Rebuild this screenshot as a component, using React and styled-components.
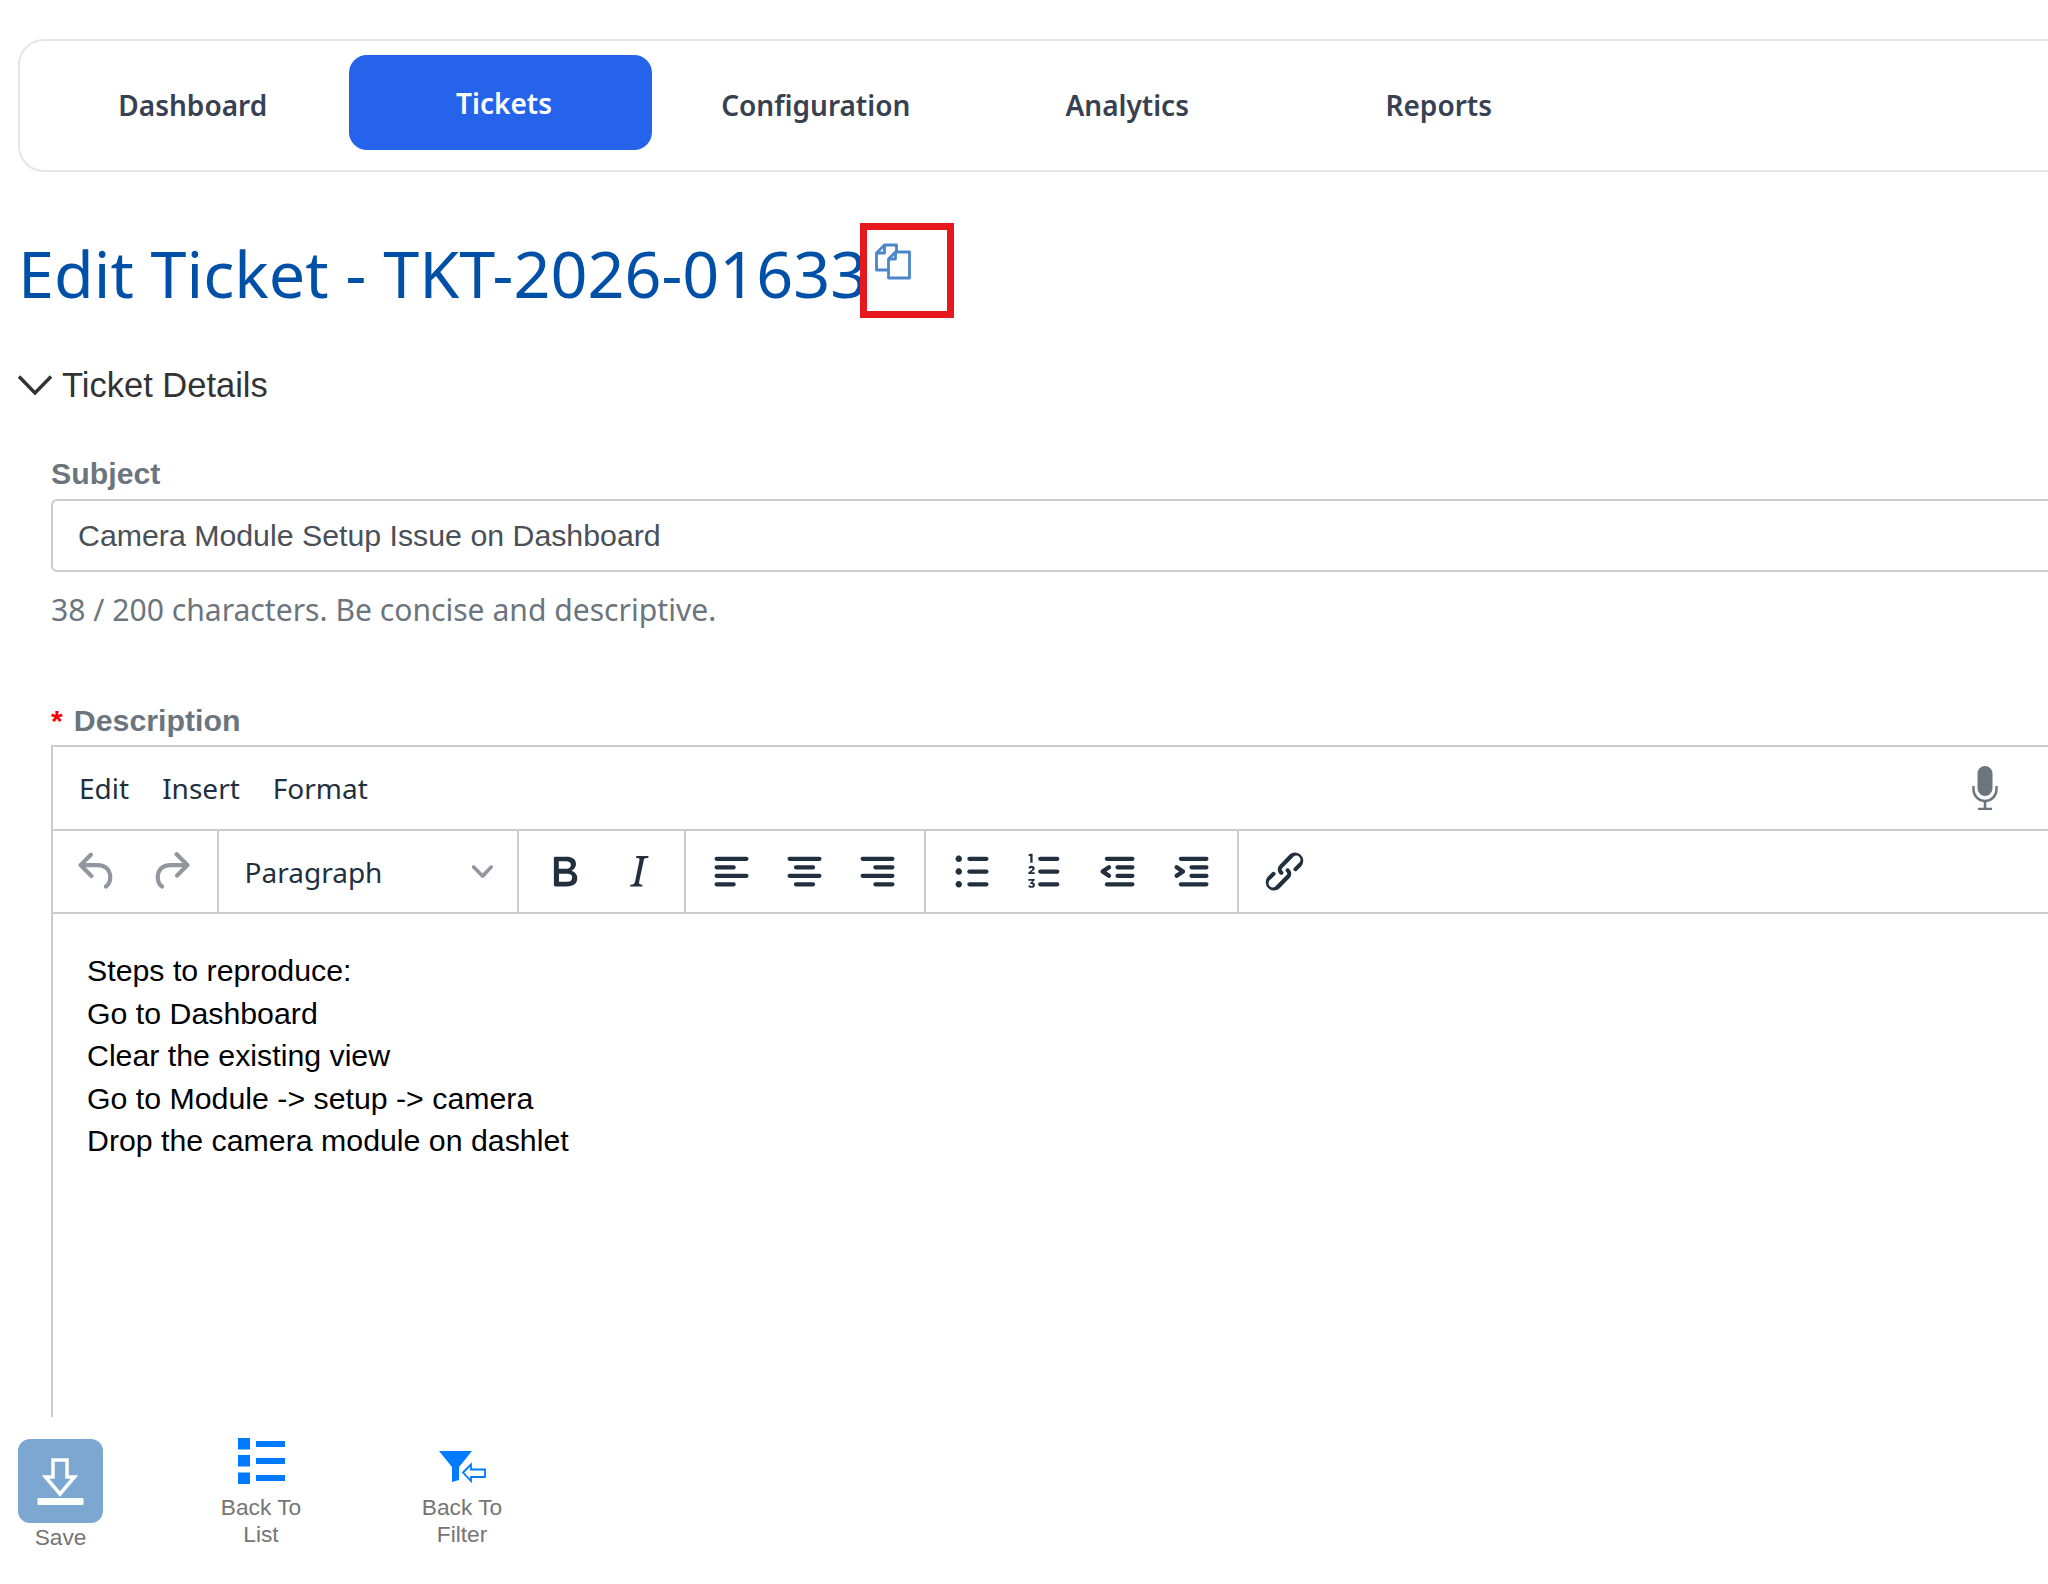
import styled, { createGlobalStyle } from "styled-components";

const GlobalStyle = createGlobalStyle`
  html, body {
    margin: 0;
    padding: 0;
    background: #fff;
  }
  body {
    width: 2048px;
    height: 1584px;
    overflow: hidden;
    font-family: "Liberation Sans", Arial, sans-serif;
  }
`;

const TABS = ["Dashboard", "Tickets", "Configuration", "Analytics", "Reports"];
const CONTENT_LINES = [
  "Steps to reproduce:",
  "Go to Dashboard",
  "Clear the existing view",
  "Go to Module -> setup -> camera",
  "Drop the camera module on dashlet",
];

// editor toolbar glyphs, 24 unit grid
const ICONS = {
  undo: "M6.4 8H12c3.7 0 6.2 2 6.8 5.1.6 2.7-.4 5.6-2.3 6.8a1 1 0 0 1-1-1.8c1.1-.6 1.8-2.7 1.4-4.6-.5-2.1-2.1-3.5-4.9-3.5H6.4l3.3 3.3a1 1 0 1 1-1.4 1.4l-5-5a1 1 0 0 1 0-1.4l5-5a1 1 0 0 1 1.4 1.4L6.4 8z",
  redo: "M17.6 10H12c-2.8 0-4.4 1.4-4.9 3.5-.4 2 .3 4 1.4 4.6a1 1 0 1 1-1 1.8c-2-1.2-2.9-4.1-2.3-6.8.6-3 3-5.1 6.8-5.1h5.6l-3.3-3.3a1 1 0 1 1 1.4-1.4l5 5a1 1 0 0 1 0 1.4l-5 5a1 1 0 0 1-1.4-1.4l3.3-3.3z",
  bold: "M7.8 19c-.3 0-.5 0-.6-.2l-.2-.5V5.7c0-.2 0-.4.2-.5l.6-.2h5c1.5 0 2.7.3 3.5 1 .7.6 1.1 1.4 1.1 2.5a3 3 0 0 1-.6 1.9c-.4.6-1 1-1.6 1.2.4.1.9.3 1.3.6s.8.7 1 1.2c.4.4.5 1 .5 1.6 0 1.3-.4 2.3-1.3 3-.8.7-2.1 1-3.8 1H7.8zm5-8.3c.6 0 1.2-.1 1.6-.5.4-.3.6-.7.6-1.3 0-1.1-.8-1.7-2.3-1.7H9.3v3.5h3.4zm.5 6c.7 0 1.3-.1 1.7-.4.4-.4.6-.9.6-1.5s-.2-1-.7-1.4c-.4-.3-1-.4-2-.4H9.4v3.8h4z",
  italic: "M16.7 4.7l-.1.9h-.3c-.6 0-1 0-1.4.3-.3.3-.4.6-.5 1.1l-2.1 9.8v.6c0 .5.4.8 1.4.8h.2l-.2.8H8l.2-.8h.2c1.1 0 1.8-.5 2-1.5l2-9.8.1-.5c0-.6-.4-.8-1.4-.8h-.3l.2-.9h5.8z",
  alignLeft: "M5 5h14c.6 0 1 .4 1 1s-.4 1-1 1H5a1 1 0 1 1 0-2zm0 4h8c.6 0 1 .4 1 1s-.4 1-1 1H5a1 1 0 1 1 0-2zm0 8h8c.6 0 1 .4 1 1s-.4 1-1 1H5a1 1 0 0 1 0-2zm0-4h14c.6 0 1 .4 1 1s-.4 1-1 1H5a1 1 0 0 1 0-2z",
  alignCenter: "M5 5h14c.6 0 1 .4 1 1s-.4 1-1 1H5a1 1 0 1 1 0-2zm3 4h8c.6 0 1 .4 1 1s-.4 1-1 1H8a1 1 0 1 1 0-2zm0 8h8c.6 0 1 .4 1 1s-.4 1-1 1H8a1 1 0 0 1 0-2zm-3-4h14c.6 0 1 .4 1 1s-.4 1-1 1H5a1 1 0 0 1 0-2z",
  alignRight: "M5 5h14c.6 0 1 .4 1 1s-.4 1-1 1H5a1 1 0 1 1 0-2zm6 4h8c.6 0 1 .4 1 1s-.4 1-1 1h-8a1 1 0 0 1 0-2zm0 8h8c.6 0 1 .4 1 1s-.4 1-1 1h-8a1 1 0 0 1 0-2zm-6-4h14c.6 0 1 .4 1 1s-.4 1-1 1H5a1 1 0 0 1 0-2z",
  bullets: "M11 5h8c.6 0 1 .4 1 1s-.4 1-1 1h-8a1 1 0 0 1 0-2zm0 6h8c.6 0 1 .4 1 1s-.4 1-1 1h-8a1 1 0 0 1 0-2zm0 6h8c.6 0 1 .4 1 1s-.4 1-1 1h-8a1 1 0 0 1 0-2zM4.5 6c0-.4.1-.8.4-1 .3-.4.7-.5 1.1-.5s.8.1 1 .4c.4.3.5.7.5 1.1s-.1.8-.4 1c-.3.4-.7.5-1.1.5s-.8-.1-1-.4c-.4-.3-.5-.7-.5-1.1zm0 6c0-.4.1-.8.4-1 .3-.4.7-.5 1.1-.5s.8.1 1 .4c.4.3.5.7.5 1.1s-.1.8-.4 1c-.3.4-.7.5-1.1.5s-.8-.1-1-.4c-.4-.3-.5-.7-.5-1.1zm0 6c0-.4.1-.8.4-1 .3-.4.7-.5 1.1-.5s.8.1 1 .4c.4.3.5.7.5 1.1s-.1.8-.4 1c-.3.4-.7.5-1.1.5s-.8-.1-1-.4c-.4-.3-.5-.7-.5-1.1z",
  numbers: "M10 17h8c.6 0 1 .4 1 1s-.4 1-1 1h-8a1 1 0 0 1 0-2zm0-6h8c.6 0 1 .4 1 1s-.4 1-1 1h-8a1 1 0 0 1 0-2zm0-6h8c.6 0 1 .4 1 1s-.4 1-1 1h-8a1 1 0 1 1 0-2zM5.1 3.6h1.3v4.3H5.3V4.7h-.8v-.6zM4.4 10.1c.2-.5.8-.8 1.5-.8.9 0 1.5.5 1.5 1.2 0 .5-.3.9-.9 1.3l-.8.6h1.7v.8H4.4v-.7l1.5-1.2c.3-.2.4-.4.4-.6 0-.2-.2-.4-.5-.4s-.5.2-.6.5zM4.4 15.5h3v.6l-1.1 1c.7.1 1.2.5 1.2 1.2 0 .9-.7 1.4-1.6 1.4-.7 0-1.3-.3-1.6-.8l.7-.5c.2.3.5.5.9.5s.6-.2.6-.5-.3-.5-.8-.5h-.4v-.6l1-1h-1.9z",
  outdent: "M7 5h12c.6 0 1 .4 1 1s-.4 1-1 1H7a1 1 0 1 1 0-2zm5 4h7c.6 0 1 .4 1 1s-.4 1-1 1h-7a1 1 0 0 1 0-2zm0 4h7c.6 0 1 .4 1 1s-.4 1-1 1h-7a1 1 0 0 1 0-2zm-5 4h12a1 1 0 0 1 0 2H7a1 1 0 0 1 0-2zm1.6-3.8a1 1 0 0 1-1.2 1.6l-3-2a1 1 0 0 1 0-1.6l3-2a1 1 0 0 1 1.2 1.6L6.8 12l1.8 1.2z",
  indent: "M7 5h12c.6 0 1 .4 1 1s-.4 1-1 1H7a1 1 0 1 1 0-2zm5 4h7c.6 0 1 .4 1 1s-.4 1-1 1h-7a1 1 0 0 1 0-2zm0 4h7c.6 0 1 .4 1 1s-.4 1-1 1h-7a1 1 0 0 1 0-2zm-5 4h12a1 1 0 0 1 0 2H7a1 1 0 0 1 0-2zm-2.6-3.8L6.2 12l-1.8-1.2a1 1 0 0 1 1.2-1.6l3 2a1 1 0 0 1 0 1.6l-3 2a1 1 0 1 1-1.2-1.6z",
  link: "M6.2 12.3a1 1 0 0 1 1.4 1.4l-2 2a2 2 0 1 0 2.6 2.8l4.8-4.8a1 1 0 0 0 0-1.4 1 1 0 1 1 1.4-1.3 2.9 2.9 0 0 1 0 4L9.6 20a3.9 3.9 0 0 1-5.5-5.5l2-2zm11.6-.6a1 1 0 0 1-1.4-1.4l2-2a2 2 0 1 0-2.6-2.8L11 10.3a1 1 0 0 0 0 1.4 1 1 0 1 1-1.4 1.3 2.9 2.9 0 0 1 0-4L14.4 4a3.9 3.9 0 0 1 5.5 5.5l-2 2z",
};

const TOOL_GROUPS = [
  ["alignLeft", "alignCenter", "alignRight"],
  ["bullets", "numbers", "outdent", "indent"],
];

const ToolIcon = ({ name, disabled }) => (
  <ToolButton $disabled={disabled}>
    <svg width="51" height="51" viewBox="0 0 24 24">
      <path d={ICONS[name]} fill="currentColor" fillRule="evenodd" />
    </svg>
  </ToolButton>
);

const App = () => {
  return (
    <>
      <GlobalStyle />
      <Page>
        <Nav>
          {TABS.map((tab) => (
            <Tab key={tab} $active={tab === "Tickets"}>
              {tab}
            </Tab>
          ))}
        </Nav>

        <TitleRow>
          <Title>Edit Ticket - TKT-2026-01633</Title>
          <CopyWrap>
            <svg width="38" height="37" viewBox="0 0 37 37" fill="none" stroke="#4a86c8" strokeWidth="2.8" strokeLinejoin="round">
              <path d="M13 27H2V10L10 2H22V8" />
              <path d="M10 2V10H2" />
              <path d="M14 16L21 9H35V35H14Z" />
              <path d="M21 9V16H14" />
            </svg>
            <RedBox />
          </CopyWrap>
        </TitleRow>

        <SectionHead>
          <svg width="34" height="20" viewBox="0 0 34 20" fill="none" stroke="#333" strokeWidth="3.4">
            <path d="M1 1.5L17 18L33 1.5" />
          </svg>
          <span>Ticket Details</span>
        </SectionHead>

        <Section>
          <FieldLabel $top={44}>Subject</FieldLabel>
          <SubjectInput>Camera Module Setup Issue on Dashboard</SubjectInput>
          <Hint>38 / 200 characters. Be concise and descriptive.</Hint>
          <FieldLabel $top={71}>
            <Star>*</Star>Description
          </FieldLabel>

          <Editor>
            <MenuBar>
              <MenuItems>
                <span>Edit</span>
                <span>Insert</span>
                <span>Format</span>
              </MenuItems>
              <MicIcon width="26" height="44" viewBox="0 0 26 44">
                <rect x="5.5" y="0" width="15" height="30" rx="7.5" fill="#6c757d" />
                <path d="M1.5 20v3.5a11.5 11.5 0 0 0 23 0V20" fill="none" stroke="#6c757d" strokeWidth="2.4" />
                <path d="M13 35v7M6 43h14" fill="none" stroke="#6c757d" strokeWidth="2.6" />
              </MicIcon>
            </MenuBar>

            <Toolbar>
              <HistoryGroup>
                <ToolIcon name="undo" disabled />
                <ToolIcon name="redo" disabled />
              </HistoryGroup>
              <FormatSelect>
                <span>Paragraph</span>
                <svg width="21" height="21" viewBox="0 0 10 10">
                  <path
                    d="M8.7 2.2c.3-.3.8-.3 1 0 .4.4.4.9 0 1.2L5.7 7.8c-.3.3-.9.3-1.2 0L.2 3.4a.8.8 0 0 1 0-1.2c.3-.3.8-.3 1.1 0L5 6l3.7-3.8z"
                    fill="rgba(34,47,62,.5)"
                  />
                </svg>
              </FormatSelect>
              <ToolGroup>
                <ToolIcon name="bold" />
                <ToolIcon name="italic" />
              </ToolGroup>
              {TOOL_GROUPS.map((group) => (
                <ToolGroup key={group[0]}>
                  {group.map((name) => (
                    <ToolIcon key={name} name={name} />
                  ))}
                </ToolGroup>
              ))}
              <ToolGroup $last>
                <ToolIcon name="link" />
              </ToolGroup>
            </Toolbar>

            <EditorBody>
              {CONTENT_LINES.map((line) => (
                <div key={line}>{line}</div>
              ))}
            </EditorBody>
          </Editor>
        </Section>

        <Footer>
          <FooterItem $width={85} $gap={7}>
            <SaveButton>
              <svg width="85" height="84" viewBox="0 0 85 84">
                <path d="M35 21H49V38H56.5L42 55L27.5 38H35Z" fill="none" stroke="#fff" strokeWidth="3.5" />
                <rect x="19.5" y="59" width="46" height="7" rx="1" fill="#fff" />
              </svg>
            </SaveButton>
            <FooterText>Save</FooterText>
          </FooterItem>

          <FooterItem $width={100}>
            <FooterIcon>
              <svg width="47" height="46" viewBox="0 0 47 46" fill="#007bff">
                <rect x="0" y="0" width="12" height="11.5" />
                <rect x="0" y="17" width="12" height="11.5" />
                <rect x="0" y="34.5" width="12" height="11.5" />
                <rect x="18" y="3" width="29" height="6" />
                <rect x="18" y="20" width="29" height="6" />
                <rect x="18" y="37" width="29" height="6" />
              </svg>
            </FooterIcon>
            <FooterText>
              Back To
              <br />
              List
            </FooterText>
          </FooterItem>

          <FooterItem $width={100}>
            <FooterIcon>
              <svg width="47" height="33" viewBox="0 0 47 33">
                <path d="M0 0H33L20 16V29L13 31V16Z" fill="#007bff" />
                <path d="M24 21.5L32 13.5V18.5H46V26H32V30Z" fill="#fff" stroke="#007bff" strokeWidth="1.8" />
              </svg>
            </FooterIcon>
            <FooterText>
              Back To
              <br />
              Filter
            </FooterText>
          </FooterItem>
        </Footer>
      </Page>
    </>
  );
};

const Page = styled.div`
  width: 2048px;
  height: 1584px;
  overflow: hidden;
  padding-top: 39px;
  box-sizing: border-box;
`;

const Nav = styled.nav`
  display: grid;
  grid-template-columns: repeat(5, 311.5px);
  align-items: start;
  box-sizing: border-box;
  height: 133px;
  width: 2100px;
  margin-left: 18px;
  padding: 14px 0 0 17px;
  border: 2px solid #e5e5e5;
  border-radius: 26px;
  font-family: "Noto Sans", sans-serif;
  font-size: 28px;
  font-weight: 600;
`;

const Tab = styled.div`
  display: flex;
  align-items: center;
  justify-content: center;
  height: 95px;
  box-sizing: border-box;
  color: ${(p) => (p.$active ? "#fff" : "#374151")};
  background: ${(p) => (p.$active ? "#2563eb" : "transparent")};
  border-radius: ${(p) => (p.$active ? "18px" : "0")};
  margin: ${(p) => (p.$active ? "0 8px 0 0.5px" : "0")};
  padding: ${(p) => (p.$active ? "1px 0 0 7px" : "5px 0 0 0")};
`;

const TitleRow = styled.div`
  display: flex;
  align-items: flex-start;
  height: 102px;
  margin: 51px 0 0 18px;
`;

const Title = styled.h1`
  margin: -1px 0 0;
  font-family: "Noto Sans", sans-serif;
  font-size: 64.7px;
  font-weight: 400;
  line-height: 102px;
  color: #0050a8;
  white-space: nowrap;
`;

const CopyWrap = styled.div`
  position: relative;
  margin: 20px 0 0 7px;
  width: 37px;
  height: 37px;
`;

const RedBox = styled.div`
  position: absolute;
  top: -20px;
  left: -14px;
  width: 94px;
  height: 95px;
  box-sizing: border-box;
  border: 7px solid #e8191c;
`;

const SectionHead = styled.div`
  display: flex;
  align-items: center;
  gap: 10px;
  height: 50px;
  margin: 35px 0 0 18px;
  font-size: 34.5px;
  color: #333;
`;

const Section = styled.section`
  margin-left: 51px;
  width: 2100px;
`;

const FieldLabel = styled.div`
  height: 40px;
  line-height: 40px;
  margin-top: ${(p) => p.$top}px;
  font-size: 30.3px;
  font-weight: 700;
  color: #6c757d;
`;

const Star = styled.span`
  color: #f00;
  margin-right: 11px;
`;

const SubjectInput = styled.div`
  box-sizing: border-box;
  height: 73px;
  margin-top: 5px;
  padding-left: 25px;
  line-height: 69px;
  border: 2.5px solid #ccc;
  border-radius: 6px;
  font-size: 30.3px;
  color: #495057;
`;

const Hint = styled.div`
  height: 40px;
  line-height: 40px;
  margin-top: 18px;
  font-family: "Noto Sans", sans-serif;
  font-size: 30.1px;
  color: #6c757d;
`;

const Editor = styled.div`
  box-sizing: border-box;
  height: 672px;
  margin-top: 4px;
  border: 2px solid #ccc;
  border-bottom: none;
  overflow: hidden;
`;

const MenuBar = styled.div`
  display: flex;
  align-items: center;
  justify-content: space-between;
  box-sizing: border-box;
  width: 1997px;
  height: 82px;
  padding: 0 0 0 26px;
  font-family: "Noto Sans", sans-serif;
  font-size: 28px;
  color: #222f3e;
`;

const MenuItems = styled.div`
  display: flex;
  gap: 33px;
`;

const MicIcon = styled.svg`
  margin-right: 52px;
`;

const Toolbar = styled.div`
  display: flex;
  align-items: stretch;
  height: 85px;
  border-top: 2px solid #ccc;
  border-bottom: 2px solid #ccc;
  box-sizing: border-box;
`;

const ToolGroup = styled.div`
  display: flex;
  align-items: center;
  padding: 0 9px;
  border-right: ${(p) => (p.$last ? "none" : "2px solid #ccc")};
`;

const HistoryGroup = styled(ToolGroup)`
  padding: 0 9px 0 8px;
`;

const ToolButton = styled.div`
  display: flex;
  align-items: center;
  justify-content: center;
  width: 73.3px;
  color: ${(p) => (p.$disabled ? "rgba(34,47,62,.5)" : "#222f3e")};
`;

const FormatSelect = styled.div`
  display: flex;
  align-items: center;
  justify-content: space-between;
  box-sizing: border-box;
  width: 300.5px;
  padding: 0 24px 0 26px;
  border-right: 2px solid #ccc;
  font-family: "Noto Sans", sans-serif;
  font-size: 28px;
  color: #222f3e;
`;

const EditorBody = styled.div`
  padding: 36px 0 0 34px;
  font-size: 30.3px;
  line-height: 42.5px;
  color: #000;
`;

const Footer = styled.footer`
  display: flex;
  align-items: flex-start;
  gap: 101px;
  padding: 22px 0 0 18px;
`;

const FooterItem = styled.div`
  display: flex;
  flex-direction: column;
  align-items: center;
  width: ${(p) => p.$width}px;
  margin-right: ${(p) => p.$gap || 0}px;
`;

const SaveButton = styled.div`
  display: flex;
  width: 85px;
  height: 84px;
  margin-bottom: 1px;
  border-radius: 12px;
  background: #7ba7d0;
`;

const FooterIcon = styled.div`
  display: flex;
  align-items: flex-end;
  justify-content: center;
  height: 46px;
  margin: -1px 0 10px;
`;

const FooterText = styled.div`
  font-size: 22.7px;
  line-height: 27px;
  color: #757575;
  text-align: center;
`;

export default App;
